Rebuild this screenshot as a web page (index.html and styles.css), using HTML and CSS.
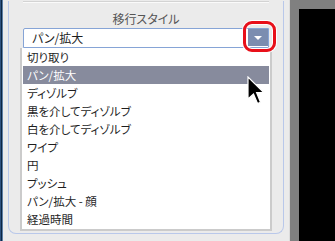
FILE: index.html
```html
<!DOCTYPE html>
<html lang="ja">
<head>
  <meta charset="UTF-8">
  <title>移行スタイル</title>
  <link rel="stylesheet" href="styles.css">
</head>
<body>
  <div class="window">
    <div class="frame-edge"></div>

    <div class="panel">
      <div class="group">
        <div class="separator"></div>
        <div class="group-title">移行スタイル</div>

        <div class="combo">
          <span class="combo-value">パン/拡大</span>
          <span class="combo-button">
            <svg width="8" height="4" viewBox="0 0 8 4"><path d="M0 0H8L4 4Z" fill="#fff"/></svg>
          </span>
          <span class="callout"></span>
        </div>

        <ul class="dropdown">
          <li class="option">切り取り</li>
          <li class="option selected">パン/拡大</li>
          <li class="option">ディゾルブ</li>
          <li class="option">黒を介してディゾルブ</li>
          <li class="option">白を介してディゾルブ</li>
          <li class="option">ワイプ</li>
          <li class="option">円</li>
          <li class="option">プッシュ</li>
          <li class="option">パン/拡大 - 顔</li>
          <li class="option">経過時間</li>
        </ul>
      </div>
    </div>

    <div class="side">
      <div class="preview"></div>
    </div>
  </div>

  <svg class="cursor" width="18" height="30" viewBox="0 0 18 30">
    <path d="M1 1V23L6.5 18L10.5 27.5L13.5 26.2L9.6 16.6H16.8Z" fill="#000" stroke="#fff" stroke-width="1.2" stroke-linejoin="miter"/>
  </svg>
</body>
</html>
```

FILE: styles.css
```css
body {
  margin: 0;
  width: 335px;
  height: 241px;
  overflow: hidden;
  position: relative;
  font-family: "Noto Sans CJK JP", sans-serif;
  font-feature-settings: "palt";
  font-size: 12px;
  color: #1e1e1e;
  background-color: #ebebeb;
}

.window {
  display: flex;
  height: 241px;
}

.frame-edge {
  width: 3px;
  background: linear-gradient(to right, #2d5280 0, #2d5280 1px, #0c2744 1px, #0c2744 2px, #5d7ea6 2px);
}

.panel {
  width: 276px;
  padding: 0 5px 8px 5px;
  background-color: #ebebeb;
}

.group {
  height: 233px;
  box-sizing: border-box;
  padding: 0 14px;
  border: 1px solid #b9c8ea;
  border-top: none;
  border-radius: 0 0 8px 8px;
}

.separator {
  margin-top: 1px;
  border-top: 1px solid #d3d3d3;
  border-bottom: 1px solid #fafafa;
}

.group-title {
  padding-top: 8px;
  margin-bottom: 1px;
  line-height: 16px;
  text-align: center;
  color: #555;
  font-size: 12px;
}

.combo {
  position: relative;
  display: flex;
  align-items: center;
  height: 20px;
  box-sizing: border-box;
  border: 1px solid #86a4d6;
  border-radius: 2px 0 0 0;
  background-color: #fff;
}

.combo-value {
  flex: 1;
  padding-left: 8px;
  line-height: 18px;
}

.combo-button {
  display: flex;
  align-items: center;
  justify-content: center;
  width: 20px;
  height: 17px;
  margin: 0 0 1px 0;
  align-self: flex-start;
  background-color: #7b8db0;
}

.callout {
  position: absolute;
  left: 219px;
  top: -8px;
  width: 33px;
  height: 31px;
  box-sizing: border-box;
  border: 3px solid #e8101a;
  border-radius: 9px;
  box-shadow: 0 0 0 1px #fff, inset 0 0 0 1px #fff;
}

.dropdown {
  list-style: none;
  margin: 0 -3px 0 -3px;
  padding: 0 1px 1px 1px;
  background-color: #fff;
  border: 2px solid #cbcbcb;
  border-top: none;
}

.option {
  height: 18px;
  line-height: 18px;
  padding-left: 4px;
  font-size: 11.5px;
}

.option.selected {
  background-color: #878b9d;
  color: #fff;
}

.side {
  flex: 1;
  padding: 9px 0 0 9px;
  background-color: #808080;
  border-left: 1px solid #dcdcdc;
}

.preview {
  height: 100%;
  background-color: #000;
}

.cursor {
  position: absolute;
  left: 247px;
  top: 76px;
}
```
